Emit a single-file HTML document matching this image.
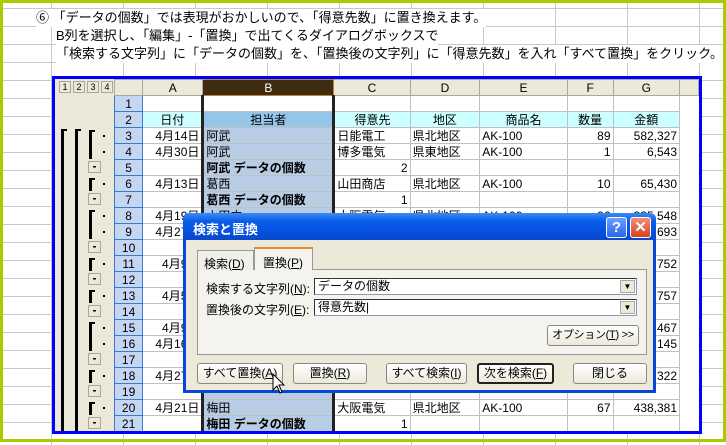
<!DOCTYPE html>
<html><head><meta charset="utf-8"><style>
*{margin:0;padding:0;box-sizing:border-box}
body{width:726px;height:445px;overflow:hidden;position:relative;background:#fff;font-family:"Liberation Sans","Noto Sans CJK JP",sans-serif;font-size:12px;color:#000}
.bg{position:absolute;left:0;top:0;width:726px;height:445px;
background-image:repeating-linear-gradient(90deg,transparent 0 51px,#c8c8c8 51px 52px,transparent 52px 72px),repeating-linear-gradient(180deg,transparent 0 8px,#c8c8c8 8px 9px,transparent 9px 18px);}
.grn{position:absolute;left:0;top:0;width:726px;height:442px;border:3px solid #a8cc00}
.txt{position:absolute;left:56px;background:#fff;font-size:13px;line-height:18px;white-space:nowrap}
.xl{position:absolute;left:52px;top:76px;width:650px;height:358px;border:3px solid #0000ff;background:#ece9d8;overflow:hidden}
table{position:absolute;left:59px;top:0;border-collapse:collapse;table-layout:fixed}
td{height:16px;border:1px solid #c0c0c0;padding:0 2px;white-space:nowrap;overflow:hidden;font-size:12px;line-height:14px;background:#fff}
tr.h td{background:#ece9d8;text-align:center;border-color:#aca899}
td.n{background:#c4d6f0;text-align:center;border-color:#3c78d8}
td.b{background:#b8cce4}
tr.c td{background:#ccffff;text-align:center}
tr.c td.b{background:#95c5e8}
tr.c td.n{background:#c4d6f0}
td.r{text-align:right}
td.bb{font-weight:bold}
.bl{border-left:3px solid #222!important;border-right:3px solid #222!important}
.ol{position:absolute;background:#000}
.mb{position:absolute;width:13px;height:12px;background:#ece9d8;border:1px solid #aca899;font-size:12px;line-height:8px;text-align:center;font-weight:bold}
.dot{position:absolute;width:2px;height:2px;background:#000}
.dlg{position:absolute;left:183px;top:213px;width:473px;height:180px;background:#ece9d8;border:3px solid #0746d8;border-top:0;border-radius:6px 6px 0 0}
.tb{position:absolute;left:-3px;top:0;width:473px;height:27px;border-radius:7px 7px 0 0;background:linear-gradient(#3a8cf8,#0a5de8 30%,#0550e0 70%,#0a48c8);color:#fff;font-weight:bold;font-size:13px;padding:6px 0 0 10px}
.btn{position:absolute;height:21px;border:1px solid #888;border-radius:3px;background:linear-gradient(#fff,#ece9d8);font-size:12px;text-align:center;line-height:19px;white-space:nowrap}
.in{position:absolute;height:17px;background:#fff;border:1px solid #7f9db9;border-top-color:#333;border-left-color:#333;font-size:12px;line-height:15px;padding-left:3px}
.dd{position:absolute;right:1px;top:1px;width:15px;height:13px;background:#ece9d8;border:1px solid #aaa;font-size:8px;text-align:center;line-height:11px}
.lb{position:absolute;font-size:12px;white-space:nowrap}
u{text-decoration:underline}
</style></head><body>
<div class="bg"></div>
<div class="grn"></div>
<div class="txt" style="top:9px;left:36px">⑥ 「データの個数」では表現がおかしいので、「得意先数」に置き換えます。</div>
<div class="txt" style="top:27px">B列を選択し、「編集」-「置換」で出てくるダイアログボックスで</div>
<div class="txt" style="top:45px">「検索する文字列」に「データの個数」を、「置換後の文字列」に「得意先数」を入れ「すべて置換」をクリック。</div>

<div class="xl">
<div style="position:absolute;left:0;top:0;width:59px;height:16px;font-size:9px">
<span style="position:absolute;left:4px;top:2px;width:12px;height:12px;border:1px solid #aca899;text-align:center">1</span>
<span style="position:absolute;left:18px;top:2px;width:12px;height:12px;border:1px solid #aca899;text-align:center">2</span>
<span style="position:absolute;left:32px;top:2px;width:12px;height:12px;border:1px solid #aca899;text-align:center">3</span>
<span style="position:absolute;left:46px;top:2px;width:12px;height:12px;border:1px solid #aca899;text-align:center">4</span></div>
<div class="ol" style="left:6px;top:50px;width:3px;height:310px"></div>
<div class="ol" style="left:6px;top:50px;width:6px;height:2px"></div>
<div class="ol" style="left:20px;top:50px;width:3px;height:310px"></div>
<div class="ol" style="left:20px;top:50px;width:6px;height:2px"></div>
<div class="ol" style="left:34px;top:51px;width:3px;height:29px"></div><div class="ol" style="left:34px;top:51px;width:6px;height:2px"></div>
<div class="dot" style="left:48px;top:56px"></div><div class="dot" style="left:48px;top:72px"></div><div class="mb" style="left:33px;top:82px">-</div>
<div class="ol" style="left:34px;top:99px;width:3px;height:13px"></div><div class="ol" style="left:34px;top:99px;width:6px;height:2px"></div>
<div class="dot" style="left:48px;top:104px"></div><div class="mb" style="left:33px;top:114px">-</div>
<div class="ol" style="left:34px;top:131px;width:3px;height:29px"></div><div class="ol" style="left:34px;top:131px;width:6px;height:2px"></div>
<div class="dot" style="left:48px;top:136px"></div><div class="dot" style="left:48px;top:152px"></div><div class="mb" style="left:33px;top:162px">-</div>
<div class="ol" style="left:34px;top:179px;width:3px;height:13px"></div><div class="ol" style="left:34px;top:179px;width:6px;height:2px"></div>
<div class="dot" style="left:48px;top:184px"></div><div class="mb" style="left:33px;top:194px">-</div>
<div class="ol" style="left:34px;top:211px;width:3px;height:13px"></div><div class="ol" style="left:34px;top:211px;width:6px;height:2px"></div>
<div class="dot" style="left:48px;top:216px"></div><div class="mb" style="left:33px;top:226px">-</div>
<div class="ol" style="left:34px;top:243px;width:3px;height:29px"></div><div class="ol" style="left:34px;top:243px;width:6px;height:2px"></div>
<div class="dot" style="left:48px;top:248px"></div><div class="dot" style="left:48px;top:264px"></div><div class="mb" style="left:33px;top:274px">-</div>
<div class="ol" style="left:34px;top:291px;width:3px;height:13px"></div><div class="ol" style="left:34px;top:291px;width:6px;height:2px"></div>
<div class="dot" style="left:48px;top:296px"></div><div class="mb" style="left:33px;top:306px">-</div>
<div class="ol" style="left:34px;top:323px;width:3px;height:13px"></div><div class="ol" style="left:34px;top:323px;width:6px;height:2px"></div>
<div class="dot" style="left:48px;top:328px"></div><div class="mb" style="left:33px;top:338px">-</div>

<table>
<colgroup><col style="width:29px"><col style="width:61px"><col style="width:133px"><col style="width:78px"><col style="width:71px"><col style="width:91px"><col style="width:47px"><col style="width:68px"><col style="width:20px"></colgroup>
<tr class="h"><td></td><td>A</td><td style="background:#3f2c12;color:#fff;border-color:#c08030">B</td><td>C</td><td>D</td><td>E</td><td>F</td><td>G</td><td></td></tr>
<tr><td class="n">1</td><td></td><td class="bl"></td><td></td><td></td><td></td><td></td><td></td><td style="border:0"></td></tr>
<tr class="c"><td class="n">2</td><td>日付</td><td class="b bl">担当者</td><td>得意先</td><td>地区</td><td>商品名</td><td>数量</td><td>金額</td><td style="background:#fff;border:0"></td></tr>
<tr><td class="n">3</td><td class="r">4月14日</td><td class="b bl">阿武</td><td>日能電工</td><td>県北地区</td><td>AK-100</td><td class="r">89</td><td class="r">582,327</td><td style="border:0"></td></tr>
<tr><td class="n">4</td><td class="r">4月30日</td><td class="b bl">阿武</td><td>博多電気</td><td>県東地区</td><td>AK-100</td><td class="r">1</td><td class="r">6,543</td><td style="border:0"></td></tr>
<tr><td class="n">5</td><td></td><td class="b bb bl">阿武 データの個数</td><td class="r">2</td><td></td><td></td><td></td><td></td><td style="border:0"></td></tr>
<tr><td class="n">6</td><td class="r">4月13日</td><td class="b bl">葛西</td><td>山田商店</td><td>県北地区</td><td>AK-100</td><td class="r">10</td><td class="r">65,430</td><td style="border:0"></td></tr>
<tr><td class="n">7</td><td></td><td class="b bb bl">葛西 データの個数</td><td class="r">1</td><td></td><td></td><td></td><td></td><td style="border:0"></td></tr>
<tr><td class="n">8</td><td class="r">4月19日</td><td class="b bl">山田中</td><td>大阪電気</td><td>県北地区</td><td>AK-100</td><td class="r">96</td><td class="r">335,548</td><td style="border:0"></td></tr>
<tr><td class="n">9</td><td class="r">4月27日</td><td class="b bl">山田中</td><td></td><td></td><td></td><td></td><td class="r">33,693</td><td style="border:0"></td></tr>
<tr><td class="n">10</td><td></td><td class="b bl"></td><td></td><td></td><td></td><td></td><td></td><td style="border:0"></td></tr>
<tr><td class="n">11</td><td class="r">4月9日</td><td class="b bl"></td><td></td><td></td><td></td><td></td><td class="r">8,752</td><td style="border:0"></td></tr>
<tr><td class="n">12</td><td></td><td class="b bl"></td><td></td><td></td><td></td><td></td><td></td><td style="border:0"></td></tr>
<tr><td class="n">13</td><td class="r">4月5日</td><td class="b bl"></td><td></td><td></td><td></td><td></td><td class="r">47,757</td><td style="border:0"></td></tr>
<tr><td class="n">14</td><td></td><td class="b bl"></td><td></td><td></td><td></td><td></td><td></td><td style="border:0"></td></tr>
<tr><td class="n">15</td><td class="r">4月9日</td><td class="b bl"></td><td></td><td></td><td></td><td></td><td class="r">51,467</td><td style="border:0"></td></tr>
<tr><td class="n">16</td><td class="r">4月16日</td><td class="b bl"></td><td></td><td></td><td></td><td></td><td class="r">98,145</td><td style="border:0"></td></tr>
<tr><td class="n">17</td><td></td><td class="b bl"></td><td></td><td></td><td></td><td></td><td></td><td style="border:0"></td></tr>
<tr><td class="n">18</td><td class="r">4月27日</td><td class="b bl"></td><td></td><td></td><td></td><td></td><td class="r">53,322</td><td style="border:0"></td></tr>
<tr><td class="n">19</td><td></td><td class="b bl"></td><td></td><td></td><td></td><td></td><td></td><td style="border:0"></td></tr>
<tr><td class="n">20</td><td class="r">4月21日</td><td class="b bl">梅田</td><td>大阪電気</td><td>県北地区</td><td>AK-100</td><td class="r">67</td><td class="r">438,381</td><td style="border:0"></td></tr>
<tr><td class="n">21</td><td></td><td class="b bb bl">梅田 データの個数</td><td class="r">1</td><td></td><td></td><td></td><td></td><td style="border:0"></td></tr>
<tr><td class="n"></td><td></td><td class="b bl"></td><td></td><td></td><td></td><td></td><td></td><td style="border:0"></td></tr>
</table>
</div>

<div class="dlg">
<div class="tb">検索と置換
<div style="position:absolute;right:29px;top:4px;width:21px;height:21px;border:1px solid #fff;border-radius:3px;background:linear-gradient(#6aa0ff,#2a66e8);text-align:center;line-height:19px;font-size:15px">?</div>
<div style="position:absolute;right:5px;top:4px;width:21px;height:21px;border:1px solid #fff;border-radius:3px;background:linear-gradient(#f0907a,#d84020);text-align:center;line-height:19px;font-size:15px">✕</div>
</div>
<div style="position:absolute;left:11px;top:56px;width:450px;height:86px;border:1px solid #919b9c;background:#f4f3ee"></div>
<div style="position:absolute;left:11px;top:37px;width:57px;height:20px;border:1px solid #919b9c;border-bottom:0;background:#f0efe8;font-size:12px;padding:4px 0 0 6px;white-space:nowrap">検索(<u>D</u>)</div>
<div style="position:absolute;left:68px;top:34px;width:59px;height:23px;border:1px solid #919b9c;border-top:2px solid #e68b2c;border-bottom:0;background:#f4f3ee;font-size:12px;padding:5px 0 0 8px;white-space:nowrap">置換(<u>P</u>)</div>
<div class="lb" style="left:20px;top:67px">検索する文字列(<u>N</u>):</div>
<div class="lb" style="left:20px;top:88px">置換後の文字列(<u>E</u>):</div>
<div class="in" style="left:128px;top:65px;width:323px">データの個数<div class="dd">▼</div></div>
<div class="in" style="left:128px;top:86px;width:323px">得意先数|<div class="dd">▼</div></div>
<div class="btn" style="left:361px;top:112px;width:92px;font-size:11px;letter-spacing:-0.3px">オプション(<u>T</u>) &gt;&gt;</div>
<div class="btn" style="left:11px;top:150px;width:86px">すべて置換(<u>A</u>)</div>
<div class="btn" style="left:107px;top:150px;width:74px">置換(<u>R</u>)</div>
<div class="btn" style="left:200px;top:150px;width:81px">すべて検索(<u>I</u>)</div>
<div class="btn" style="left:291px;top:150px;width:77px;border:2px solid #222;line-height:17px">次を検索(<u>F</u>)</div>
<div class="btn" style="left:387px;top:150px;width:74px">閉じる</div>
<svg style="position:absolute;left:86px;top:160px" width="14" height="22" viewBox="0 0 14 22"><path d="M1 1 L1 17 L5 13 L8 20 L10 19 L7 12 L12 12 Z" fill="#fff" stroke="#000" stroke-width="1"/></svg>
</div>
</body></html>
